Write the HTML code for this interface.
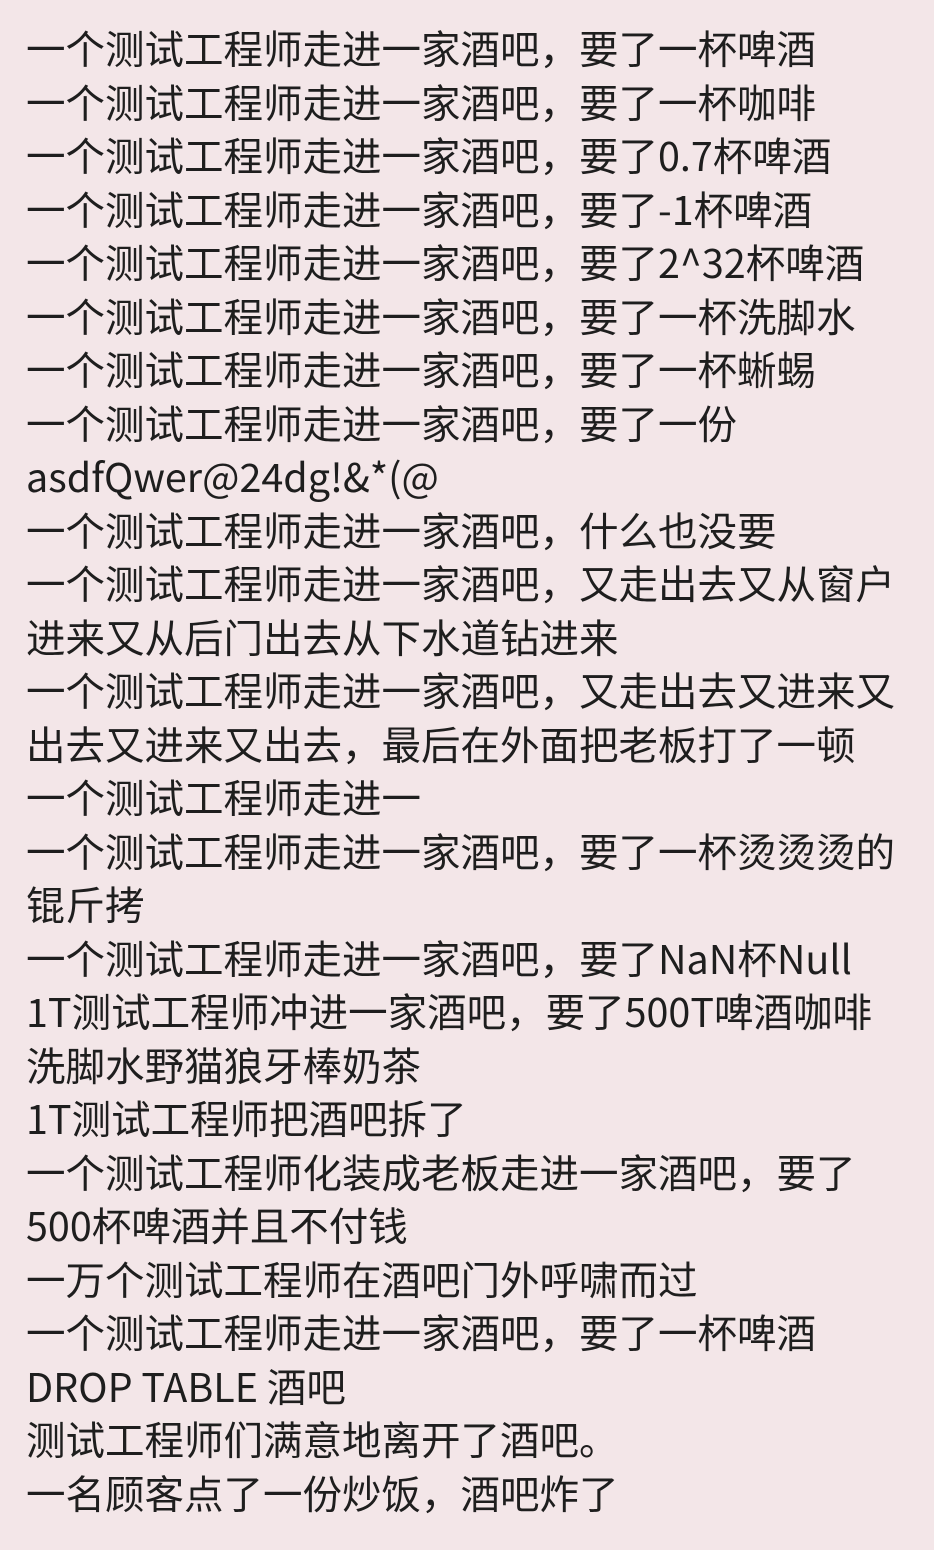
<!DOCTYPE html>
<html><head><meta charset="utf-8"><style>
html,body{margin:0;padding:0;}
body{width:934px;height:1550px;background:#f3e6e8;overflow:hidden;}
.t{position:absolute;left:26px;top:21px;font-family:"Noto Sans CJK SC","Liberation Sans",sans-serif;font-size:39.5px;line-height:53.5px;color:#1e1e1e;white-space:pre;}
</style></head><body>
<div class="t">一个测试工程师走进一家酒吧，要了一杯啤酒
一个测试工程师走进一家酒吧，要了一杯咖啡
一个测试工程师走进一家酒吧，要了0.7杯啤酒
一个测试工程师走进一家酒吧，要了-1杯啤酒
一个测试工程师走进一家酒吧，要了2^32杯啤酒
一个测试工程师走进一家酒吧，要了一杯洗脚水
一个测试工程师走进一家酒吧，要了一杯蜥蜴
一个测试工程师走进一家酒吧，要了一份
asdfQwer@24dg!&amp;*(@
一个测试工程师走进一家酒吧，什么也没要
一个测试工程师走进一家酒吧，又走出去又从窗户
进来又从后门出去从下水道钻进来
一个测试工程师走进一家酒吧，又走出去又进来又
出去又进来又出去，最后在外面把老板打了一顿
一个测试工程师走进一
一个测试工程师走进一家酒吧，要了一杯烫烫烫的
锟斤拷
一个测试工程师走进一家酒吧，要了NaN杯Null
1T测试工程师冲进一家酒吧，要了500T啤酒咖啡
洗脚水野猫狼牙棒奶茶
1T测试工程师把酒吧拆了
一个测试工程师化装成老板走进一家酒吧，要了
500杯啤酒并且不付钱
一万个测试工程师在酒吧门外呼啸而过
一个测试工程师走进一家酒吧，要了一杯啤酒
DROP TABLE 酒吧
测试工程师们满意地离开了酒吧。
一名顾客点了一份炒饭，酒吧炸了</div>
</body></html>
